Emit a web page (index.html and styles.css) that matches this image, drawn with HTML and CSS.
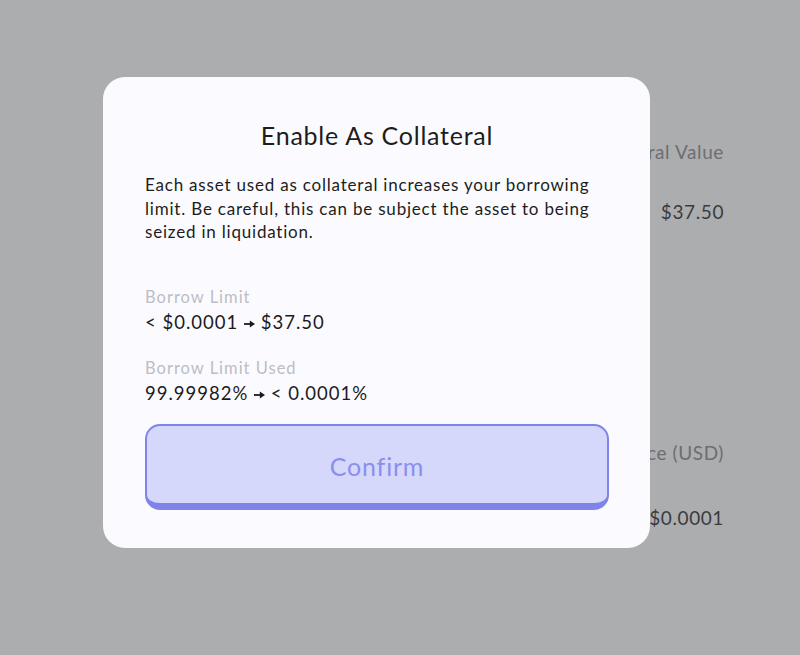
FILE: index.html
```html
<!DOCTYPE html>
<html>
<head>
<meta charset="utf-8">
<link rel="stylesheet" href="styles.css">
</head>
<body>
<div class="page">
  <div class="stat stat-top">
    <div class="stat-label">Collateral Value</div>
    <div class="stat-value">$37.50</div>
  </div>
  <div class="stat stat-bottom">
    <div class="stat-label">Price (USD)</div>
    <div class="stat-value">$0.0001</div>
  </div>
</div>
<div class="overlay"></div>
<div class="modal">
  <h2 class="modal-title">Enable As Collateral</h2>
  <p class="modal-text">Each asset used as collateral increases your borrowing limit. Be careful, this can be subject the asset to being seized in liquidation.</p>
  <div class="info">
    <div class="info-label">Borrow Limit</div>
    <div class="info-value">&lt; $0.0001 <svg class="arrow" width="11" height="8" viewBox="0 0 11 8"><path d="M0 4h7" stroke="currentColor" stroke-width="1.8"/><path d="M5.8 0.6L11 4L5.8 7.4Z" fill="currentColor"/></svg> $37.50</div>
  </div>
  <div class="info">
    <div class="info-label">Borrow Limit Used</div>
    <div class="info-value">99.99982% <svg class="arrow" width="11" height="8" viewBox="0 0 11 8"><path d="M0 4h7" stroke="currentColor" stroke-width="1.8"/><path d="M5.8 0.6L11 4L5.8 7.4Z" fill="currentColor"/></svg> &lt; 0.0001%</div>
  </div>
  <button class="confirm">Confirm</button>
</div>
</body>
</html>
```
FILE: styles.css
```css
html, body {
  margin: 0;
  padding: 0;
}
body {
  width: 800px;
  height: 655px;
  overflow: hidden;
  background: #ffffff;
  font-family: Lato, "Noto Sans", sans-serif;
  position: relative;
}
.page {
  display: flex;
  flex-direction: column;
  align-items: flex-end;
  padding: 139px 76px 0 0;
}
.stat {
  display: flex;
  flex-direction: column;
  align-items: flex-end;
}
.stat-label {
  font-size: 19px;
  line-height: 26px;
  letter-spacing: 0.6px;
  color: #7f8084;
}
.stat-value {
  font-size: 19px;
  line-height: 26px;
  letter-spacing: 0.6px;
  color: #17181b;
  margin-top: 34px;
}
.stat-bottom {
  margin-top: 215px;
}
.stat-bottom .stat-value {
  margin-top: 39px;
}
.overlay {
  position: absolute;
  inset: 0;
  background: rgba(90, 92, 96, 0.5);
}
.modal {
  position: absolute;
  left: 103px;
  top: 77px;
  width: 547px;
  height: 471px;
  box-sizing: border-box;
  padding: 40px 41px 0 42px;
  background: #fbfbff;
  border-radius: 22px;
  display: flex;
  flex-direction: column;
}
.modal-title {
  margin: 0;
  text-align: center;
  font-weight: 400;
  font-size: 25px;
  line-height: 36px;
  letter-spacing: 0.75px;
  color: #1d1d20;
}
.modal-text {
  margin: 20px 0 0;
  font-size: 17px;
  line-height: 23.5px;
  letter-spacing: 0.8px;
  color: #1d1d20;
}
.info {
  margin-top: 41px;
  display: flex;
  flex-direction: column;
}
.info + .info {
  margin-top: 21px;
}
.info-label {
  font-size: 16.5px;
  line-height: 24px;
  letter-spacing: 1px;
  color: #bdbdc3;
}
.info-value {
  font-size: 18.5px;
  line-height: 26px;
  letter-spacing: 1px;
  color: #1b1b1e;
}
.arrow {
  vertical-align: 1px;
}
.confirm {
  margin-top: 18px;
  height: 86px;
  box-sizing: border-box;
  border: 2px solid #7f84e9;
  border-bottom-width: 7px;
  border-radius: 15px;
  background: #d5d8fa;
  color: #8a8fee;
  font-family: Lato, "Noto Sans", sans-serif;
  font-size: 25px;
  letter-spacing: 0.8px;
  padding: 0;
  padding-top: 4px;
}
```
